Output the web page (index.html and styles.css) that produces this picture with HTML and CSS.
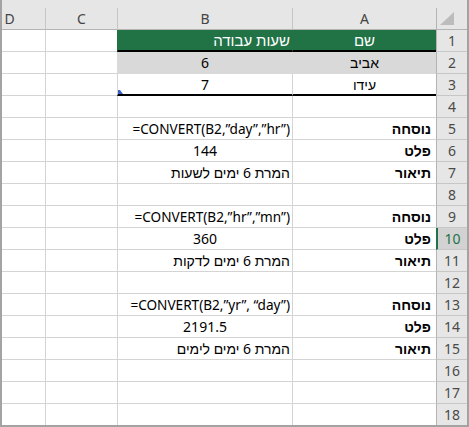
FILE: index.html
```html
<!DOCTYPE html>
<html lang="he">
<head>
    <meta charset="UTF-8">
    <title>CONVERT</title>
    <link rel="stylesheet" href="styles.css">
</head>
<body>
    <div class="window">
        <div class="top-strip"></div>
        <div class="sheet">
            <!-- column headers -->
            <div class="ch corner">
                <svg width="14" height="13" viewBox="0 0 14 13"><polygon points="14,0 14,13 0,13" fill="#bcbcbc"/></svg>
            </div>
            <div class="ch">A</div>
            <div class="ch">B</div>
            <div class="ch">C</div>
            <div class="ch">D</div>

            <div class="rh">1</div>
            <div class="cell head center">שם</div>
            <div class="cell head">שעות עבודה</div>
            <div class="cell"></div>
            <div class="cell"></div>

            <div class="rh">2</div>
            <div class="cell band center">אביב</div>
            <div class="cell band center">6</div>
            <div class="cell"></div>
            <div class="cell"></div>

            <div class="rh">3</div>
            <div class="cell last center">עידו</div>
            <div class="cell last center marked">7<span class="handle"></span></div>
            <div class="cell"></div>
            <div class="cell"></div>

            <div class="rh">4</div>
            <div class="cell"></div>
            <div class="cell"></div>
            <div class="cell"></div>
            <div class="cell"></div>

            <div class="rh">5</div>
            <div class="cell label">נוסחה</div>
            <div class="cell"><span class="formula" dir="ltr">=CONVERT(B2,”day”,”hr”)</span></div>
            <div class="cell"></div>
            <div class="cell"></div>

            <div class="rh">6</div>
            <div class="cell label">פלט</div>
            <div class="cell center">144</div>
            <div class="cell"></div>
            <div class="cell"></div>

            <div class="rh">7</div>
            <div class="cell label">תיאור</div>
            <div class="cell">המרת 6 ימים לשעות</div>
            <div class="cell"></div>
            <div class="cell"></div>

            <div class="rh">8</div>
            <div class="cell"></div>
            <div class="cell"></div>
            <div class="cell"></div>
            <div class="cell"></div>

            <div class="rh">9</div>
            <div class="cell label">נוסחה</div>
            <div class="cell"><span class="formula" dir="ltr">=CONVERT(B2,”hr”,”mn”)</span></div>
            <div class="cell"></div>
            <div class="cell"></div>

            <div class="rh active">10</div>
            <div class="cell label">פלט</div>
            <div class="cell center">360</div>
            <div class="cell"></div>
            <div class="cell"></div>

            <div class="rh">11</div>
            <div class="cell label">תיאור</div>
            <div class="cell">המרת 6 ימים לדקות</div>
            <div class="cell"></div>
            <div class="cell"></div>

            <div class="rh">12</div>
            <div class="cell"></div>
            <div class="cell"></div>
            <div class="cell"></div>
            <div class="cell"></div>

            <div class="rh">13</div>
            <div class="cell label">נוסחה</div>
            <div class="cell"><span class="formula" dir="ltr">=CONVERT(B2,”yr”, “day”)</span></div>
            <div class="cell"></div>
            <div class="cell"></div>

            <div class="rh">14</div>
            <div class="cell label">פלט</div>
            <div class="cell center">2191.5</div>
            <div class="cell"></div>
            <div class="cell"></div>

            <div class="rh">15</div>
            <div class="cell label">תיאור</div>
            <div class="cell">המרת 6 ימים לימים</div>
            <div class="cell"></div>
            <div class="cell"></div>

            <div class="rh">16</div>
            <div class="cell"></div>
            <div class="cell"></div>
            <div class="cell"></div>
            <div class="cell"></div>

            <div class="rh">17</div>
            <div class="cell"></div>
            <div class="cell"></div>
            <div class="cell"></div>
            <div class="cell"></div>

            <div class="rh">18</div>
            <div class="cell"></div>
            <div class="cell"></div>
            <div class="cell"></div>
            <div class="cell"></div>
        </div>
    </div>
</body>
</html>
```

FILE: styles.css
```css
* {
    box-sizing: border-box;
}
body {
    margin: 0;
    font-family: 'Noto Sans', 'Liberation Sans', sans-serif;
    font-size: 14px;
    color: #000;
    background: #fff;
}
.window {
    width: 469px;
    height: 427px;
    overflow: hidden;
    border-left: 2px solid #a3a3a3;
    border-right: 2px solid #a3a3a3;
    border-bottom: 2px solid #a3a3a3;
    direction: rtl;
}
.top-strip {
    height: 8px;
    background: #e6e6e6;
}
.sheet {
    display: grid;
    grid-template-columns: 31px 144px 175px 72px 72px;
    grid-auto-rows: 22px;
    direction: rtl;
}
.ch {
    background: #e6e6e6;
    border-left: 1px solid #c6c6c6;
    border-bottom: 1px solid #b4b4b4;
    color: #444;
    display: flex;
    align-items: center;
    justify-content: center;
    padding-bottom: 1px;
}
.ch.corner {
    direction: ltr;
    justify-content: flex-start;
    align-items: flex-start;
    padding: 4px 0 0 3px;
    border-left-color: #b4b4b4;
}
.ch.corner svg {
    display: block;
}
.rh {
    background: #e6e6e6;
    border-left: 1px solid #b4b4b4;
    border-bottom: 1px solid #c6c6c6;
    color: #4a4a4a;
    display: flex;
    align-items: center;
    justify-content: center;
}
.rh.active {
    background: #d2d2d2;
    color: #217346;
    border-left: 2px solid #217346;
}
.cell {
    border-left: 1px solid #d4d4d4;
    border-bottom: 1px solid #d4d4d4;
    display: flex;
    align-items: center;
    padding: 0 2px;
    white-space: nowrap;
}
.center {
    justify-content: center;
}
.head {
    background: #217346;
    color: #fff;
    font-size: 15px;
    border-left-color: #217346;
    border-bottom: 2px solid #000;
}
.band {
    background: #d9d9d9;
    border-left-color: #d9d9d9;
    border-bottom-color: #d9d9d9;
}
.last {
    border-bottom: 2px solid #000;
}
.label {
    font-weight: bold;
    padding-right: 5px;
}
.formula {
    font-size: 13.6px;
}
.marked {
    position: relative;
}
.handle {
    position: absolute;
    left: 0;
    bottom: 0;
    width: 5px;
    height: 4px;
    background: #3a5fc2;
    clip-path: polygon(0 0, 40% 0, 100% 100%, 0 100%);
}
```
